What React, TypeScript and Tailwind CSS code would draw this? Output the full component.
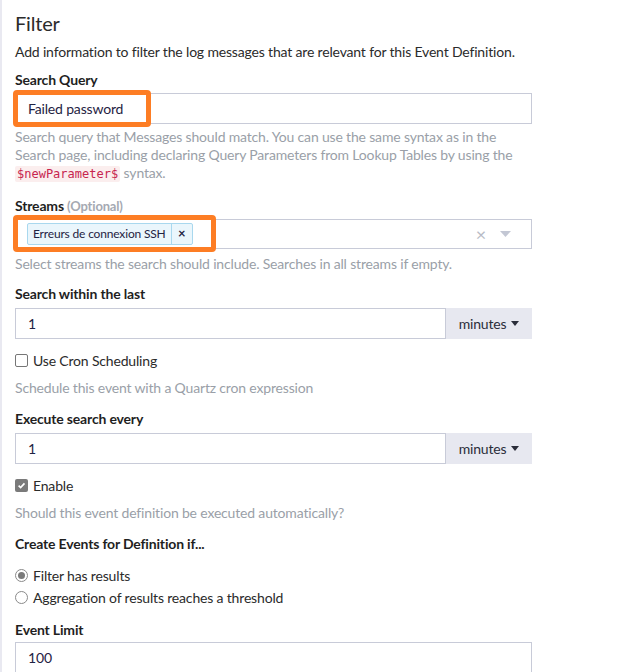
import React from "react";

const font = { fontFamily: "Lato, 'Liberation Sans', sans-serif" };

function Checkbox({ checked }: { checked?: boolean }) {
  return checked ? (
    <span className="inline-flex h-[13px] w-[13px] items-center justify-center rounded-[2px] bg-[#7a7a7a]">
      <svg width="9" height="9" viewBox="0 0 10 10">
        <path d="M1.8 5.2 L4 7.3 L8.3 2.6" stroke="#fff" strokeWidth="1.8" fill="none" />
      </svg>
    </span>
  ) : (
    <span className="inline-block h-[13px] w-[13px] rounded-[2px] border border-[#767676] bg-white" />
  );
}

function Radio({ checked }: { checked?: boolean }) {
  return (
    <span className="inline-flex h-[13px] w-[13px] items-center justify-center rounded-full border border-[#8a8a8a] bg-white">
      {checked && <span className="h-[7px] w-[7px] rounded-full bg-[#7a7a7a]" />}
    </span>
  );
}

function Caret({ color }: { color: string }) {
  return (
    <svg width="8" height="5" viewBox="0 0 8 5" className="inline-block">
      <path d="M0 0 L8 0 L4 5 Z" fill={color} />
    </svg>
  );
}

function NumberWithUnit({ value }: { value: string }) {
  return (
    <div className="flex h-[31px] w-[517px]">
      <div className="flex flex-1 items-center border border-[#c8cbd8] bg-white pl-[12px] text-[14px] text-[#1f2343]">
        {value}
      </div>
      <div className="flex w-[86px] items-center justify-center gap-[5px] bg-[#e7e8f0] text-[14px] text-[#2a2d3a]">
        minutes <Caret color="#2a2d3a" />
      </div>
    </div>
  );
}

export default function App() {
  return (
    <div
      className="h-[672px] w-[640px] overflow-hidden border-l-2 border-[#e9e9f1] bg-white pl-[13px] tracking-[-0.17px]"
      style={font}
    >
      <div className="w-[517px]">
        <h2 className="pt-[11px] text-[20px] leading-[24px] text-[#2b2b2b]">Filter</h2>
        <p className="mt-[7px] text-[14px] leading-[20px] text-[#2b2b2b]">
          Add information to filter the log messages that are relevant for this Event Definition.
        </p>

        <div className="mt-[8px] text-[14px] font-bold leading-[20px] text-[#1f1f1f]">Search Query</div>
        <div className="relative mt-[3px]">
          <div className="flex h-[31px] items-center border border-[#c8cbd8] pl-[12px] text-[14px] text-[#1f2343]">
            Failed password
          </div>
          <div className="absolute left-[-2px] top-[-3px] h-[37px] w-[138px] rounded-[4px] border-[5px] border-[#fd7d24]" />
        </div>
        <p className="mt-[4px] text-[14px] leading-[18px] text-[#9a9fa8]">
          Search query that Messages should match. You can use the same syntax as in the Search page,
          including declaring Query Parameters from Lookup Tables by using the{" "}
          <code
            className="rounded-[2px] bg-[#fbeeee] px-[2px] py-[1px] text-[12px] tracking-normal text-[#c7254e]"
            style={{ fontFamily: "'DejaVu Sans Mono', monospace" }}
          >
            $newParameter$
          </code>{" "}
          syntax.
        </p>

        <div className="mt-[13px] text-[14px] font-bold leading-[20px] text-[#1f1f1f]">
          Streams <span className="text-[13px] text-[#a5a9b2]">(Optional)</span>
        </div>
        <div className="relative mt-[3px]">
          <div className="flex h-[30px] items-center border border-[#c8cbd8] pl-[11px] pr-[20px]">
            <div className="flex h-[22px] items-stretch rounded-[2px] border border-[#a9d8ee] bg-[#eaf6fc] text-[12px] text-[#1f2343]">
              <span className="flex items-center px-[5px]">Erreurs de connexion SSH</span>
              <span className="flex w-[21px] items-center justify-center border-l border-[#a9d8ee] text-[13px] font-bold">
                ×
              </span>
            </div>
            <div className="flex-1" />
            <span className="text-[18px] leading-none text-[#b8bbc6]">×</span>
            <span className="ml-[14px] flex items-center">
              <svg width="11" height="6" viewBox="0 0 11 6">
                <path d="M0 0 L11 0 L5.5 6 Z" fill="#c3c7d4" />
              </svg>
            </span>
          </div>
          <div className="absolute left-[-2px] top-[-4px] h-[37px] w-[203px] rounded-[4px] border-[5px] border-[#fd7d24]" />
        </div>
        <p className="mt-[6px] text-[14px] leading-[18px] text-[#9a9fa8]">
          Select streams the search should include. Searches in all streams if empty.
        </p>

        <div className="mt-[11px] text-[14px] font-bold leading-[20px] text-[#1f1f1f]">Search within the last</div>
        <div className="mt-[4px]">
          <NumberWithUnit value="1" />
        </div>

        <label className="mt-[11px] flex h-[20px] items-center gap-[5px] text-[14px] text-[#2b2b2b]">
          <Checkbox />
          <span>Use Cron Scheduling</span>
        </label>
        <p className="mt-[9px] text-[14px] leading-[18px] text-[#9a9fa8]">
          Schedule this event with a Quartz cron expression
        </p>

        <div className="mt-[12px] text-[14px] font-bold leading-[20px] text-[#1f1f1f]">Execute search every</div>
        <div className="mt-[4px]">
          <NumberWithUnit value="1" />
        </div>

        <label className="mt-[11px] flex h-[20px] items-center gap-[5px] text-[14px] text-[#2b2b2b]">
          <Checkbox checked />
          <span>Enable</span>
        </label>
        <p className="mt-[9px] text-[14px] leading-[18px] text-[#9a9fa8]">
          Should this event definition be executed automatically?
        </p>

        <div className="mt-[12px] text-[14px] font-bold leading-[20px] text-[#1f1f1f]">
          Create Events for Definition if...
        </div>
        <label className="mt-[11px] flex h-[20px] items-center gap-[5px] text-[14px] text-[#2b2b2b]">
          <Radio checked />
          <span>Filter has results</span>
        </label>
        <label className="mt-[2px] flex h-[20px] items-center gap-[5px] text-[14px] text-[#2b2b2b]">
          <Radio />
          <span>Aggregation of results reaches a threshold</span>
        </label>

        <div className="mt-[13px] text-[14px] font-bold leading-[20px] text-[#1f1f1f]">Event Limit</div>
        <div className="mt-[2px] flex h-[31px] items-center border border-[#c8cbd8] pl-[12px] text-[14px] text-[#1f2343]">
          100
        </div>
      </div>
    </div>
  );
}
